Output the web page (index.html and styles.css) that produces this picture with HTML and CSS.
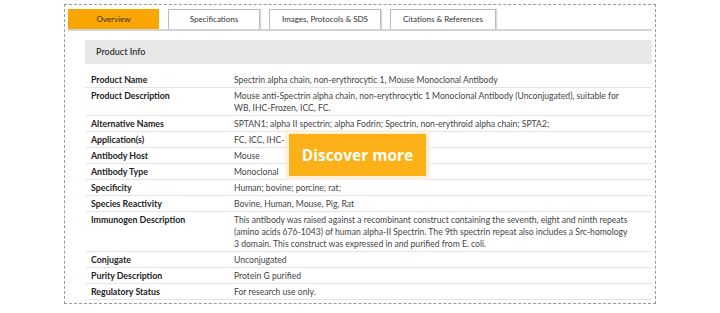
FILE: index.html
```html
<!DOCTYPE html>
<html lang="en">
<head>
    <meta charset="UTF-8">
    <meta name="viewport" content="width=device-width, initial-scale=1.0">
    <title>Spectrin alpha chain Antibody</title>
    <link rel="stylesheet" href="styles.css">
</head>
<body>
    <div class="panel">
        <div class="tabs">
            <div class="tab active">Overview</div>
            <div class="tab">Specifications</div>
            <div class="tab tab-wide">Images, Protocols &amp; SDS</div>
            <div class="tab">Citations &amp; References</div>
        </div>

        <div class="content">
            <div class="section-title">Product Info</div>

            <table class="info">
                <tr><th>Product Name</th><td>Spectrin alpha chain, non-erythrocytic 1, Mouse Monoclonal Antibody</td></tr>
                <tr><th>Product Description</th><td>Mouse anti-Spectrin alpha chain, non-erythrocytic 1 Monoclonal Antibody (Unconjugated), suitable for WB, IHC-Frozen, ICC, FC.</td></tr>
                <tr><th>Alternative Names</th><td>SPTAN1; alpha II spectrin; alpha Fodrin; Spectrin, non-erythroid alpha chain; SPTA2;</td></tr>
                <tr><th>Application(s)</th><td>FC, ICC, IHC-Frozen, WB</td></tr>
                <tr><th>Antibody Host</th><td>Mouse</td></tr>
                <tr><th>Antibody Type</th><td>Monoclonal</td></tr>
                <tr><th>Specificity</th><td>Human; bovine; porcine; rat;</td></tr>
                <tr><th>Species Reactivity</th><td>Bovine, Human, Mouse, Pig, Rat</td></tr>
                <tr><th>Immunogen Description</th><td>This antibody was raised against a recombinant construct containing the seventh, eight and ninth repeats (amino acids 676-1043) of human alpha-II Spectrin. The 9th spectrin repeat also includes a Src-homology 3 domain. This construct was expressed in and purified from E. coli.</td></tr>
                <tr><th>Conjugate</th><td>Unconjugated</td></tr>
                <tr><th>Purity Description</th><td>Protein G purified</td></tr>
                <tr><th>Regulatory Status</th><td>For research use only.</td></tr>
            </table>
        </div>

        <div class="discover">Discover more</div>
    </div>
</body>
</html>
```

FILE: styles.css
```css
body {
    margin: 0;
    background-color: #fff;
    font-family: Lato, "Open Sans", sans-serif;
    color: #333;
}
.panel {
    position: relative;
    box-sizing: border-box;
    width: 592px;
    height: 300px;
    margin: 4px 0 0 64px;
    padding: 4px 3px 0 3px;
    border: 1px dashed #999;
}
.tabs {
    display: flex;
    gap: 9px;
    border-bottom: 2px solid #d4d4d4;
}
.tab {
    box-sizing: border-box;
    min-width: 92px;
    height: 20px;
    padding: 0 12px;
    border: 1px solid #bbb;
    border-bottom: none;
    box-shadow: 1px 0 1px rgba(0,0,0,0.15);
    background-color: #fff;
    font-size: 8px;
    line-height: 19px;
    text-align: center;
    color: #333;
}
.tab.active {
    width: 91px;
    min-width: 91px;
    border-color: #f9a602;
    background-color: #f9a602;
    box-shadow: none;
}
.tab-wide {
    min-width: 99px;
}
.content {
    padding: 9px 0 0 17px;
}
.section-title {
    height: 24px;
    padding-left: 11px;
    background-color: #e8e8e8;
    font-size: 9px;
    line-height: 24px;
    font-weight: 600;
    color: #333;
}
.info {
    width: 100%;
    margin-top: 8px;
    border-collapse: collapse;
    table-layout: fixed;
    font-size: 8.6px;
    line-height: 12px;
}
.info th,
.info td {
    padding: 2px 6px 1px 6px;
    border-bottom: 1px solid #e4e4e4;
    vertical-align: top;
    text-align: left;
}
.info th {
    width: 131px;
    font-size: 8.8px;
    font-weight: bold;
    color: #222;
}
.info td {
    padding-right: 21px;
    color: #444;
}
.discover {
    position: absolute;
    left: 220px;
    top: 125px;
    box-sizing: border-box;
    width: 145px;
    height: 50px;
    border: 4px solid #fdf0dc;
    background-color: #fbb117;
    color: #fff;
    font-family: "Open Sans", sans-serif;
    font-size: 15.5px;
    font-weight: bold;
    line-height: 42px;
    text-align: center;
}
```
